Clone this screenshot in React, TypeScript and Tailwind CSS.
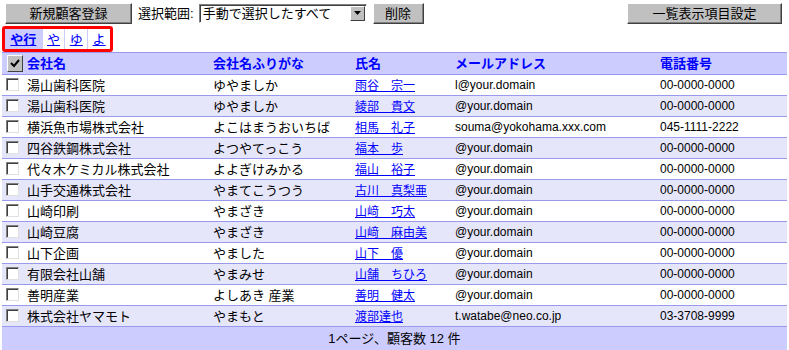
import React from "react";

const rows: [string, string, string, string, string][] = [
  ["湯山歯科医院", "ゆやましか", "雨谷　宗一", "l@your.domain", "00-0000-0000"],
  ["湯山歯科医院", "ゆやましか", "綾部　貴文", "@your.domain", "00-0000-0000"],
  ["横浜魚市場株式会社", "よこはまうおいちば", "相馬　礼子", "souma@yokohama.xxx.com", "045-1111-2222"],
  ["四谷鉄鋼株式会社", "よつやてっこう", "福本　歩", "@your.domain", "00-0000-0000"],
  ["代々木ケミカル株式会社", "よよぎけみかる", "福山　裕子", "@your.domain", "00-0000-0000"],
  ["山手交通株式会社", "やまてこうつう", "古川　真梨亜", "@your.domain", "00-0000-0000"],
  ["山崎印刷", "やまざき", "山﨑　巧太", "@your.domain", "00-0000-0000"],
  ["山崎豆腐", "やまざき", "山﨑　麻由美", "@your.domain", "00-0000-0000"],
  ["山下企画", "やました", "山下　優", "@your.domain", "00-0000-0000"],
  ["有限会社山舗", "やまみせ", "山舗　ちひろ", "@your.domain", "00-0000-0000"],
  ["善明産業", "よしあき 産業", "善明　健太", "@your.domain", "00-0000-0000"],
  ["株式会社ヤマモト", "やまもと", "渡部達也", "t.watabe@neo.co.jp", "03-3708-9999"],
];

const btn =
  "h-[21px] bg-[#c0c0c0] border border-t-white border-l-white border-r-[#404040] border-b-[#404040] shadow-[inset_-1px_-1px_0_#808080] flex items-center justify-center text-[13px] text-black leading-none";

function Box() {
  return (
    <span className="inline-block w-[13px] h-[13px] bg-white border border-t-[#808080] border-l-[#808080] border-r-[#e0e0e0] border-b-[#e0e0e0] shadow-[inset_1px_1px_0_#404040]" />
  );
}

export default function App() {
  return (
    <div
      className="w-[789px] h-[350px] overflow-hidden bg-white text-[13px] text-black"
      style={{ fontFamily: '"Liberation Sans", "Noto Sans CJK JP", sans-serif' }}
    >
      <div className="flex items-center pt-[2px] h-[24px]">
        <div className={`${btn} ml-[5px] w-[127px]`}>新規顧客登録</div>
        <span className="ml-[6px] leading-none">選択範囲:</span>
        <div className="ml-[5px] w-[168px] h-[19px] bg-white border border-t-[#808080] border-l-[#808080] border-r-white border-b-white shadow-[inset_1px_1px_0_#404040] flex items-center">
          <span className="pl-[3px] flex-1 leading-none">手動で選択したすべて</span>
          <span className="w-[15px] h-[15px] mr-[1px] bg-[#c0c0c0] border border-t-white border-l-white border-r-[#404040] border-b-[#404040] flex items-center justify-center">
            <svg width="7" height="4" viewBox="0 0 7 4"><path d="M0 0h7L3.5 4z" fill="#000" /></svg>
          </span>
        </div>
        <div className={`${btn} ml-[6px] w-[51px]`}>削除</div>
        <div className="flex-1" />
        <div className={`${btn} mr-[7px] w-[155px]`}>一覧表示項目設定</div>
      </div>

      <div className="mt-[2px] ml-[2px] w-[111px] h-[26px] border-[3px] border-[#ff0000] rounded-[3px] flex">
        <a className="w-[37px] bg-[#ccccff] flex items-center justify-center font-bold text-[#0000ff] underline leading-none">や行</a>
        <a className="w-[23px] border-l border-[#ccccff] flex items-center justify-center text-[#0000ff] underline leading-none">や</a>
        <a className="w-[23px] border-l border-[#ccccff] flex items-center justify-center text-[#0000ff] underline leading-none">ゆ</a>
        <a className="w-[23px] border-l border-[#ccccff] flex items-center justify-center text-[#0000ff] underline leading-none">よ</a>
      </div>

      <table className="ml-[2px] w-[785px] table-fixed border-collapse">
        <colgroup>
          <col className="w-[22px]" />
          <col className="w-[186px]" />
          <col className="w-[142px]" />
          <col className="w-[100px]" />
          <col className="w-[205px]" />
          <col className="w-[130px]" />
        </colgroup>
        <thead>
          <tr className="h-[22px] bg-[#ccccff] border-t border-b border-[#9999ee] text-[#0000ff] font-bold">
            <th className="p-0 pl-[5px] text-left">
              <span className="w-[16px] h-[17px] bg-[#c0c0c0] border border-t-white border-l-white border-r-[#404040] border-b-[#404040] flex items-center justify-center">
                <svg width="10" height="9" viewBox="0 0 10 9"><path d="M1 4l3 3 5-6" stroke="#000" strokeWidth="2" fill="none" /></svg>
              </span>
            </th>
            <th className="p-0 pl-[3px] text-left">会社名</th>
            <th className="p-0 pl-[3px] text-left">会社名ふりがな</th>
            <th className="p-0 pl-[3px] text-left">氏名</th>
            <th className="p-0 pl-[3px] text-left">メールアドレス</th>
            <th className="p-0 pl-[3px] text-left">電話番号</th>
          </tr>
        </thead>
        <tbody>
          {rows.map((r, i) => (
            <tr
              key={i}
              className={`h-[21px] border-b border-[#9999ee] ${i % 2 === 1 ? "bg-[#e6e6fa]" : "bg-white"}`}
            >
              <td className="p-0 pl-[4px] align-middle leading-none"><Box /></td>
              <td className="p-0 pl-[3px] whitespace-nowrap leading-none">{r[0]}</td>
              <td className="p-0 pl-[3px] whitespace-nowrap leading-none">{r[1]}</td>
              <td className="p-0 pl-[3px] whitespace-nowrap leading-none">
                <a className="text-[#0000ff] underline text-[12px]">{r[2]}</a>
              </td>
              <td className="p-0 pl-[3px] whitespace-nowrap leading-none text-[12px]">{r[3]}</td>
              <td className="p-0 pl-[3px] whitespace-nowrap leading-none text-[12px]">{r[4]}</td>
            </tr>
          ))}
          <tr className="h-[23px] bg-[#ccccff]">
            <td colSpan={6} className="p-0 text-center leading-none">1ページ、顧客数 12 件</td>
          </tr>
        </tbody>
      </table>
    </div>
  );
}
